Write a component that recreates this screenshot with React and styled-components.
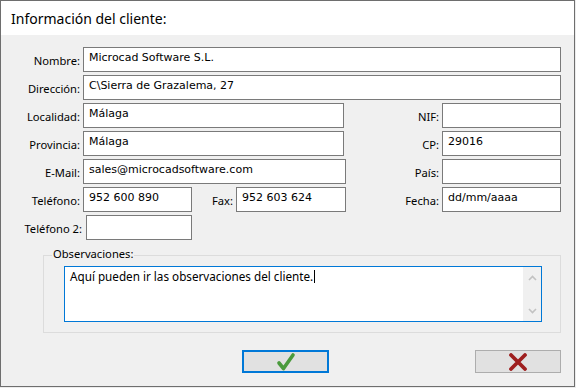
import React from "react";
import styled, { createGlobalStyle } from "styled-components";

const Global = createGlobalStyle`
  html, body { margin: 0; padding: 0; background: #ececec; }
  body { font-family: "Noto Sans", sans-serif; }
  * { box-sizing: border-box; }
`;

const Window = styled.div`
  width: 575px;
  height: 387px;
  border: 1px solid #6e6e6e;
  display: flex;
  flex-direction: column;
  background: #f0f0f0;
`;

const TitleBar = styled.div`
  height: 34px;
  flex: none;
  background: #ffffff;
  display: flex;
  align-items: center;
  padding-left: 10px;
  font-family: "Noto Sans", sans-serif;
  font-size: 14px;
  color: #000;
`;

const Body = styled.div`
  flex: 1;
  padding: 12px 13px 0 0;
  display: flex;
  flex-direction: column;
`;

const FormGrid = styled.div`
  display: grid;
  grid-template-columns: 79px 109px 38px 110px 1fr 119px;
  grid-auto-rows: 25px;
  column-gap: 3px;
  row-gap: 3px;
`;

const Label = styled.div`
  grid-column: ${(p) => p.$col || "1"};
  display: flex;
  align-items: center;
  justify-content: flex-end;
  padding-top: 2px;
  padding-right: ${(p) => p.$pr || 0}px;
  margin-right: ${(p) => p.$mr || 0}px;
  font-family: "Noto Sans", sans-serif;
  font-size: 11.2px;
  color: #000;
  white-space: nowrap;
`;

const Field = styled.div`
  grid-column: ${(p) => p.$col || "2 / -1"};
  width: ${(p) => (p.$w ? `${p.$w}px` : "auto")};
  margin-left: ${(p) => p.$ml || 0}px;
  background: #ffffff;
  border: 1px solid #7a7a7a;
  padding: 3px 5px 0;
  font-family: "DejaVu Sans", sans-serif;
  font-size: 11px;
  line-height: 14px;
  color: #000;
  white-space: nowrap;
  overflow: hidden;
`;

const Group = styled.div`
  position: relative;
  margin: 15px 0 0 42px;
  border: 1px solid #dcdcdc;
  padding: 10px 18px 10px 20px;
`;

const Legend = styled.span`
  position: absolute;
  top: -10px;
  left: 8px;
  padding: 0 1px;
  background: #f0f0f0;
  font-family: "Noto Sans", sans-serif;
  font-size: 11.2px;
  line-height: 15px;
  color: #000;
`;

const Memo = styled.div`
  height: 56px;
  border: 1px solid #0078d7;
  background: #ffffff;
  display: flex;
`;

const MemoText = styled.div`
  flex: 1;
  padding: 1px 5px 0;
  font-family: "Noto Sans", sans-serif;
  font-size: 11.7px;
  color: #000;
`;

const Caret = styled.span`
  display: inline-block;
  width: 1px;
  height: 13px;
  background: #000;
  vertical-align: -2px;
  margin-left: 1px;
`;

const ScrollBar = styled.div`
  width: 18px;
  background: #f0f0f0;
  display: flex;
  flex-direction: column;
  justify-content: space-between;
  align-items: center;
  padding: 8px 0 7px;
`;

const Buttons = styled.div`
  display: flex;
  justify-content: space-between;
  margin-top: 17px;
  padding-left: 241px;
`;

const Button = styled.button`
  width: ${(p) => p.$w}px;
  height: 23px;
  padding: 0;
  background: #e1e1e1;
  border: ${(p) => (p.$focused ? "2px solid #0078d7" : "1px solid #adadad")};
  display: flex;
  align-items: center;
  justify-content: center;
`;

const Chevron = ({ down }) => (
  <svg width="9" height="6" viewBox="0 0 9 6">
    <polyline
      points={down ? "1,1 4.5,4.5 8,1" : "1,5 4.5,1.5 8,5"}
      fill="none"
      stroke="#c2c2c2"
      strokeWidth="1.6"
    />
  </svg>
);

const Check = () => (
  <svg width="20" height="20" viewBox="0 0 20 20">
    <polyline
      points="3,11 7.5,16.5 17,3"
      fill="none"
      stroke="#4a9a3c"
      strokeWidth="3.6"
      strokeLinecap="round"
      strokeLinejoin="round"
    />
  </svg>
);

const Cross = () => (
  <svg width="20" height="18" viewBox="0 0 20 18">
    <path
      d="M3 2 L17 16 M17 2 L3 16"
      fill="none"
      stroke="#9e1f1f"
      strokeWidth="3.8"
      strokeLinecap="round"
    />
  </svg>
);

export default function App() {
  return (
    <>
      <Global />
      <Window>
        <TitleBar>Información del cliente:</TitleBar>
        <Body>
          <FormGrid>
            <Label>Nombre:</Label>
            <Field>Microcad Software S.L.</Field>

            <Label>Dirección:</Label>
            <Field>C\Sierra de Grazalema, 27</Field>

            <Label>Localidad:</Label>
            <Field $col="2 / 5" $w={261}>Málaga</Field>
            <Label $col="5">NIF:</Label>
            <Field $col="6"></Field>

            <Label>Provincia:</Label>
            <Field $col="2 / 5" $w={261}>Málaga</Field>
            <Label $col="5">CP:</Label>
            <Field $col="6">29016</Field>

            <Label>E-Mail:</Label>
            <Field $col="2 / 5">sales@microcadsoftware.com</Field>
            <Label $col="5">País:</Label>
            <Field $col="6"></Field>

            <Label>Teléfono:</Label>
            <Field $col="2">952 600 890</Field>
            <Label $col="3">Fax:</Label>
            <Field $col="4">952 603 624</Field>
            <Label $col="5">Fecha:</Label>
            <Field $col="6">dd/mm/aaaa</Field>

            <Label $mr={-2}>Teléfono 2:</Label>
            <Field $col="2" $ml={3}></Field>
          </FormGrid>

          <Group>
            <Legend>Observaciones:</Legend>
            <Memo>
              <MemoText>
                Aquí pueden ir las observaciones del cliente.
                <Caret />
              </MemoText>
              <ScrollBar>
                <Chevron />
                <Chevron down />
              </ScrollBar>
            </Memo>
          </Group>

          <Buttons>
            <Button $w={87} $focused>
              <Check />
            </Button>
            <Button $w={86}>
              <Cross />
            </Button>
          </Buttons>
        </Body>
      </Window>
    </>
  );
}
